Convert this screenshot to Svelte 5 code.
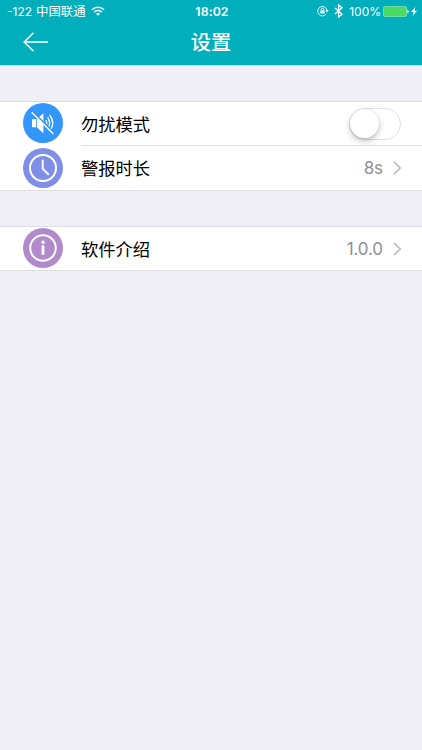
<script lang="ts">
	type Row = { icon: 'mute' | 'clock' | 'info'; label: string; value?: string };

	const groups: Row[][] = [
		[
			{ icon: 'mute', label: '勿扰模式' },
			{ icon: 'clock', label: '警报时长', value: '8s' }
		],
		[{ icon: 'info', label: '软件介绍', value: '1.0.0' }]
	];

	let silent = $state(false);
</script>

<div class="screen">
	<header>
		<div class="status">
			<div class="side">
				<span class="signal">-122</span>
				<span class="carrier">中国联通</span>
				<svg class="wifi" width="14" height="10" viewBox="0 0 14 10" fill="none" stroke="#fff" stroke-width="1.6">
					<path d="M1 3.7a8.5 8.5 0 0 1 12 0" />
					<path d="M3.2 6.1a5.2 5.2 0 0 1 7.6 0" />
					<path d="M5 7.7a2.9 2.9 0 0 1 4 0L7 9.8z" fill="#fff" stroke="none" />
				</svg>
			</div>
			<span class="time">18:02</span>
			<div class="side right">
				<svg class="lock" width="12" height="12" viewBox="0 0 12 12" fill="none" stroke="#fff" stroke-width="0.9">
					<path d="M9.3 8.9A4.7 4.7 0 1 1 10 5.2" />
					<path d="M8.5 5.1h3.2L10.1 7.4z" fill="#fff" stroke="none" />
					<path d="M3.4 5.4h4.2v3.1H3.4z" fill="#fff" stroke="none" />
					<path d="M4.3 5.8V4.5a1.2 1.2 0 0 1 2.4 0v1.3" />
				</svg>
				<svg class="bluetooth" width="9" height="14" viewBox="0 0 9 14" fill="none" stroke="#fff" stroke-width="1.3">
					<path d="M1 4l7 6.2L4.6 13V1L8 3.8 1 10" />
				</svg>
				<span class="percent">100%</span>
				<svg class="battery" width="26" height="11" viewBox="0 0 26 11">
					<rect x="0.4" y="0.4" width="23.2" height="10.2" rx="1.8" fill="#4cd964" stroke="#9be9bd" stroke-width="0.7" />
					<path d="M24.4 3.8q1.4.4 1.4 1.7t-1.4 1.7z" fill="#fff" />
				</svg>
				<svg class="bolt" width="6" height="9" viewBox="0 0 6 9">
					<path d="M4.3 0L0 5h2.5L1.6 9 6 3.7H3.5z" fill="#fff" />
				</svg>
			</div>
		</div>
		<nav>
			<button class="back" aria-label="返回">
				<svg width="26" height="20" viewBox="0 0 26 20" fill="none" stroke="#fff" stroke-width="1.5">
					<path d="M25 10H1.2M10.5 0.8L1.2 10l9.3 9.2" />
				</svg>
			</button>
			<h1>设置</h1>
		</nav>
	</header>

	{#each groups as rows}
		<section>
			{#each rows as row}
				<div class="row">
					<svg class="icon {row.icon}" width="40" height="40" viewBox="0 0 40 40" fill="none" stroke="#fff">
						{#if row.icon === 'mute'}
							<path d="M9 16.2h4.2v8H9zM14 15.8l6.4-5.6v20L14 24.6z" fill="#fff" stroke="none" />
							<path d="M22.6 17.2q2.2 3 0 6M24.6 14.4q4.2 5.8 0 11.6M26.6 12q6.4 8.2 0 16.2" stroke-width="1.3" />
							<path d="M9.6 8.4L31.2 30" stroke="#3296fa" stroke-width="1.6" />
							<path d="M8.6 9.2L30.4 31" stroke-width="1.3" />
						{:else if row.icon === 'clock'}
							<circle cx="20" cy="20" r="13" stroke-width="2" />
							<path d="M19.7 11.7v9l6.1 6" stroke-width="1.9" />
						{:else}
							<circle cx="20" cy="20" r="12.8" stroke-width="2" />
							<circle cx="20" cy="14.2" r="1.7" fill="#fff" stroke="none" />
							<path d="M20 17.2v9.6" stroke-width="2.8" />
						{/if}
					</svg>
					<div class="content">
						<span class="label">{row.label}</span>
						{#if row.value}
							<span class="value">{row.value}</span>
							<svg class="chevron" width="9" height="14" viewBox="0 0 9 14" fill="none" stroke="#c4c4c9" stroke-width="1.8">
								<path d="M1 1l6.3 6L1 13" />
							</svg>
						{:else}
							<button
								class="switch"
								class:on={silent}
								role="switch"
								aria-checked={silent}
								aria-label={row.label}
								onclick={() => (silent = !silent)}
							>
								<span class="knob"></span>
							</button>
						{/if}
					</div>
				</div>
			{/each}
		</section>
	{/each}
</div>

<style>
	:global(body) {
		margin: 0;
		background: #efeff5;
	}

	.screen {
		min-height: 750px;
		background: #efeff5;
		font-family: Inter, 'Noto Sans CJK SC', sans-serif;
		color: #000;
	}

	header {
		box-sizing: border-box;
		height: 66px;
		margin-bottom: 35px;
		background: #00afbb;
		border-bottom: 1px solid #a9dfe5;
		color: #fff;
	}

	.status {
		display: grid;
		grid-template-columns: 1fr auto 1fr;
		align-items: center;
		height: 22px;
		padding: 0 5px 0 7px;
		font-size: 12px;
	}

	.side {
		display: flex;
		align-items: center;
	}

	.right {
		justify-content: flex-end;
	}

	.carrier {
		margin-left: 4px;
		font-size: 12.4px;
	}

	.wifi {
		margin-left: 5px;
	}

	.time {
		font-size: 12.3px;
		font-weight: 600;
		letter-spacing: 0.1px;
	}

	.bluetooth {
		margin-left: 5px;
	}

	.percent {
		margin: 0 2px 0 6px;
	}

	.bolt {
		margin-left: 2px;
	}

	nav {
		display: grid;
		grid-template-columns: 1fr auto 1fr;
		align-items: center;
		height: 40px;
		padding: 0 23px;
	}

	button {
		padding: 0;
		border: 0;
		background: none;
	}

	.back {
		display: flex;
		justify-self: start;
	}

	h1 {
		margin: 0;
		padding-top: 2px;
		font-size: 20.3px;
		font-weight: 500;
		line-height: 38px;
	}

	section {
		margin-bottom: 35px;
		background: #fff;
		border-top: 1px solid #dedee2;
		border-bottom: 1px solid #dedee2;
	}

	.row {
		display: flex;
		align-items: center;
		height: 43px;
		padding-left: 23px;
	}

	.row + .row {
		height: 45px;
	}

	.icon {
		flex: none;
		margin-bottom: 1px;
		border-radius: 50%;
	}

	.row + .row .icon {
		margin-bottom: 0;
	}

	.mute {
		background: #3296fa;
	}

	.clock {
		background: #7f8fe7;
	}

	.info {
		background: #b18acb;
	}

	.content {
		flex: 1;
		display: flex;
		align-items: center;
		box-sizing: border-box;
		height: 100%;
		margin-left: 18px;
		padding-right: 20px;
	}

	.row + .row .content {
		border-top: 1px solid #dfdfe2;
	}

	.label {
		flex: 1;
		padding-bottom: 1px;
		font-size: 17.3px;
	}

	.value {
		margin-right: 10px;
		font-size: 17px;
		letter-spacing: -0.1px;
		color: #8e8e93;
	}

	.switch {
		display: flex;
		box-sizing: border-box;
		width: 52px;
		height: 32px;
		margin-right: 1px;
		border: 1.5px solid #e2e2e4;
		border-radius: 16px;
		background: #fff;
	}

	.knob {
		width: 29px;
		height: 29px;
		border-radius: 50%;
		background: #fff;
		box-shadow: 0 3px 6px rgba(0, 0, 0, 0.25), 0 0 1px rgba(0, 0, 0, 0.15);
	}

	.switch.on {
		justify-content: flex-end;
		border-color: #4cd964;
		background: #4cd964;
	}
</style>
